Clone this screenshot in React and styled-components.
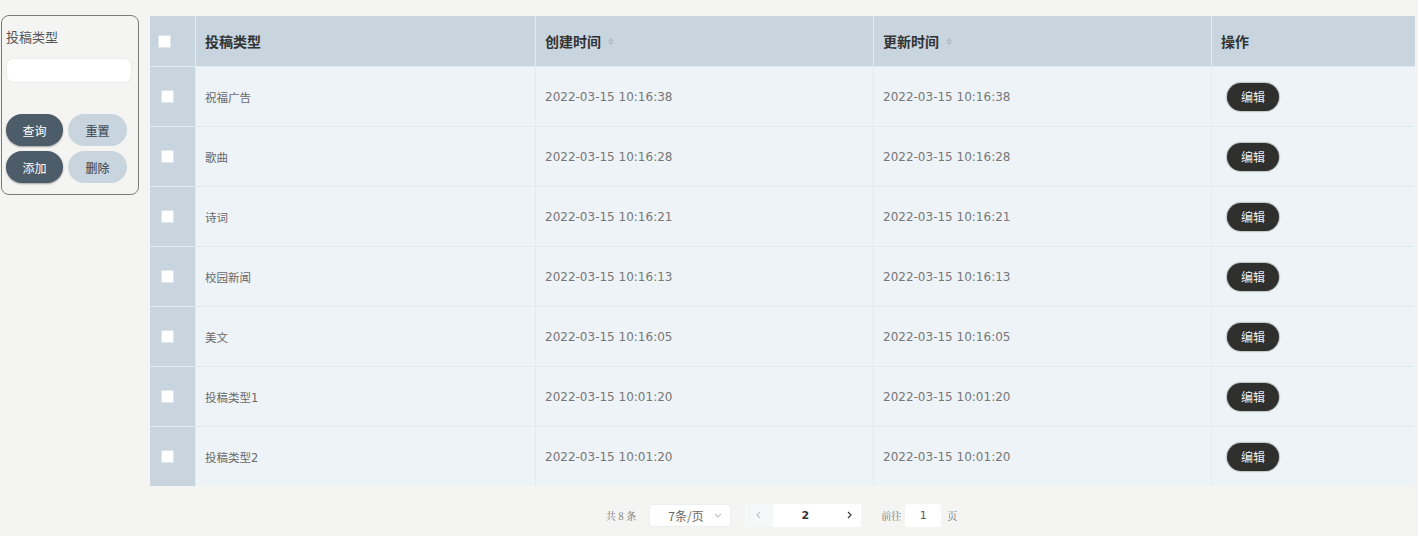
import React from "react";
import styled, { createGlobalStyle } from "styled-components";

const GlobalStyle = createGlobalStyle`
  body {
    margin: 0;
    background: #f4f4f2;
    font-family: "DejaVu Sans", "Noto Sans CJK SC", sans-serif;
  }
`;

const Page = styled.div`
  display: flex;
  align-items: flex-start;
  gap: 11px;
  padding: 15px 3px 0 1px;
  width: 1418px;
  box-sizing: border-box;
`;

const SearchPanel = styled.div`
  width: 138px;
  height: 180px;
  box-sizing: border-box;
  border: 1px solid #7a7a7a;
  border-radius: 8px;
  padding: 12px 4px 0 4px;
  display: flex;
  flex-direction: column;
`;

const Label = styled.div`
  font-family: "Noto Sans CJK SC", sans-serif;
  font-size: 13px;
  color: #555;
  line-height: 18px;
`;

const TextInput = styled.input`
  margin-top: 12px;
  width: 126px;
  height: 25px;
  box-sizing: border-box;
  border: 1px solid #ececec;
  border-radius: 8px;
  background: #fff;
  outline: none;
`;

const ButtonGrid = styled.div`
  margin-top: 31px;
  display: grid;
  grid-template-columns: 57px 59px;
  gap: 5px 5px;
`;

const PanelButton = styled.button`
  height: 32px;
  border: none;
  border-radius: 16px;
  font-family: "Noto Sans CJK SC", sans-serif;
  font-size: 12px;
  font-weight: ${(p) => (p.$primary ? 400 : 500)};
  background: ${(p) => (p.$primary ? "#4c5c68" : "#c8d5de")};
  color: ${(p) => (p.$primary ? "#fff" : "#4a5764")};
  box-shadow: ${(p) => (p.$primary ? "0 1px 2px rgba(0,0,0,0.35)" : "none")};
  padding: 0;
`;

const Main = styled.div`
  flex: 1;
  display: flex;
  flex-direction: column;
  padding-top: 1px;
`;

const Table = styled.div`
  display: flex;
  flex-direction: column;
`;

const cols = "45px 340px 338px 338px 1fr";

const HeadRow = styled.div`
  display: grid;
  grid-template-columns: ${cols};
  height: 50px;
  background: #c8d5de;
`;

const HeadCell = styled.div`
  display: flex;
  align-items: center;
  padding-left: ${(p) => (p.$first ? "8px" : "9px")};
  border-left: ${(p) => (p.$first ? "none" : "1px solid #dcecf5")};
  font-family: "Noto Sans CJK SC", sans-serif;
  font-size: 14px;
  font-weight: 600;
  color: #333;
  gap: 5px;
`;

const BodyRow = styled.div`
  display: grid;
  grid-template-columns: ${cols};
  height: 60px;
  border-top: 1px solid #dcecf5;
  box-sizing: border-box;
`;

const Cell = styled.div`
  display: flex;
  align-items: center;
  padding-left: ${(p) => (p.$pad ? p.$pad : "9px")};
  background: ${(p) => (p.$check ? "#c8d5de" : "#edf3f7")};
  border-left: ${(p) => (p.$check ? "none" : "1px solid #dcecf5")};
  font-size: ${(p) => (p.$date ? "12px" : "11.5px")};
  color: ${(p) => (p.$date ? "#777" : "#6a6a6a")};
`;

const Check = styled.span`
  width: 11px;
  height: 11px;
  background: #fff;
  border: 1px solid #e0e6ea;
  border-radius: 1px;
  display: inline-block;
`;

const Sort = styled.span`
  display: inline-flex;
  flex-direction: column;
  gap: 1px;
  margin-left: 2px;
  &::before,
  &::after {
    content: "";
    border-left: 3px solid transparent;
    border-right: 3px solid transparent;
  }
  &::before {
    border-bottom: 3px solid #b0bcc5;
  }
  &::after {
    border-top: 3px solid #b0bcc5;
  }
`;

const EditButton = styled.button`
  width: 52px;
  height: 28px;
  border: none;
  border-radius: 14px;
  background: #2f2f2d;
  color: #f0f0f0;
  font-family: "Noto Sans CJK SC", sans-serif;
  font-size: 12px;
  box-shadow: 0 0 1px 1px rgba(90, 110, 90, 0.35);
  padding: 0;
`;

const Pager = styled.div`
  display: flex;
  align-items: center;
  justify-content: center;
  height: 58px;
  padding-right: 2px;
  font-size: 11px;
  color: #666;
`;

const PagerText = styled.span`
  margin: ${(p) => p.$m || "0"};
  font-family: "Noto Serif CJK SC", "Noto Sans CJK SC", serif;
  font-size: 10px;
  color: #777;
`;

const SizeSelect = styled.div`
  width: 82px;
  height: 23px;
  background: #fff;
  border: 1px solid #eceef0;
  border-radius: 3px;
  box-sizing: border-box;
  display: flex;
  align-items: center;
  justify-content: space-between;
  padding: 0 8px 0 18px;
  font-family: "Noto Sans CJK SC", sans-serif;
  font-size: 12px;
  color: #666;
  margin-left: 13px;
`;

const PageBox = styled.div`
  display: flex;
  margin-left: 14px;
  height: 23px;
`;

const PageBtn = styled.div`
  width: ${(p) => p.$w};
  height: 23px;
  display: flex;
  align-items: center;
  justify-content: center;
  background: ${(p) => (p.$dim ? "#f6f7f8" : "#fff")};
  color: ${(p) => (p.$dim ? "#c0c4cc" : "#333")};
  font-family: "DejaVu Sans", sans-serif;
  font-size: 11px;
  font-weight: ${(p) => (p.$bold ? 700 : 400)};
`;

const JumpInput = styled.div`
  width: 36px;
  height: 23px;
  background: #fff;
  border-radius: 3px;
  display: flex;
  align-items: center;
  justify-content: center;
  font-family: "DejaVu Sans", sans-serif;
  font-size: 11px;
  color: #555;
  margin: 0 6px 0 4px;
`;

const rows = [
  ["祝福广告", "2022-03-15 10:16:38", "2022-03-15 10:16:38"],
  ["歌曲", "2022-03-15 10:16:28", "2022-03-15 10:16:28"],
  ["诗词", "2022-03-15 10:16:21", "2022-03-15 10:16:21"],
  ["校园新闻", "2022-03-15 10:16:13", "2022-03-15 10:16:13"],
  ["美文", "2022-03-15 10:16:05", "2022-03-15 10:16:05"],
  ["投稿类型1", "2022-03-15 10:01:20", "2022-03-15 10:01:20"],
  ["投稿类型2", "2022-03-15 10:01:20", "2022-03-15 10:01:20"],
];

const Chevron = ({ dir }) => (
  <svg width="8" height="8" viewBox="0 0 8 8">
    <path
      d={dir === "left" ? "M5 1 L2 4 L5 7" : dir === "right" ? "M3 1 L6 4 L3 7" : "M1 3 L4 6 L7 3"}
      fill="none"
      stroke="currentColor"
      strokeWidth="1.1"
    />
  </svg>
);

export default function App() {
  return (
    <>
      <GlobalStyle />
      <Page>
        <SearchPanel>
          <Label>投稿类型</Label>
          <TextInput />
          <ButtonGrid>
            <PanelButton $primary>查询</PanelButton>
            <PanelButton>重置</PanelButton>
            <PanelButton $primary>添加</PanelButton>
            <PanelButton>删除</PanelButton>
          </ButtonGrid>
        </SearchPanel>
        <Main>
          <Table>
            <HeadRow>
              <HeadCell $first>
                <Check />
              </HeadCell>
              <HeadCell>投稿类型</HeadCell>
              <HeadCell>
                创建时间 <Sort />
              </HeadCell>
              <HeadCell>
                更新时间 <Sort />
              </HeadCell>
              <HeadCell>操作</HeadCell>
            </HeadRow>
            {rows.map((r) => (
              <BodyRow key={r[0]}>
                <Cell $check $pad="11px">
                  <Check />
                </Cell>
                <Cell>{r[0]}</Cell>
                <Cell $date>{r[1]}</Cell>
                <Cell $date>{r[2]}</Cell>
                <Cell $pad="15px">
                  <EditButton>编辑</EditButton>
                </Cell>
              </BodyRow>
            ))}
          </Table>
          <Pager>
            <PagerText>共 8 条</PagerText>
            <SizeSelect>
              7条/页
              <span style={{ color: "#c0c4cc", display: "flex" }}>
                <Chevron dir="down" />
              </span>
            </SizeSelect>
            <PageBox>
              <PageBtn $w="28px" $dim>
                <Chevron dir="left" />
              </PageBtn>
              <PageBtn $w="64px" $bold>
                2
              </PageBtn>
              <PageBtn $w="24px">
                <Chevron dir="right" />
              </PageBtn>
            </PageBox>
            <PagerText $m="0 0 0 20px">前往</PagerText>
            <JumpInput>1</JumpInput>
            <PagerText>页</PagerText>
          </Pager>
        </Main>
      </Page>
    </>
  );
}
